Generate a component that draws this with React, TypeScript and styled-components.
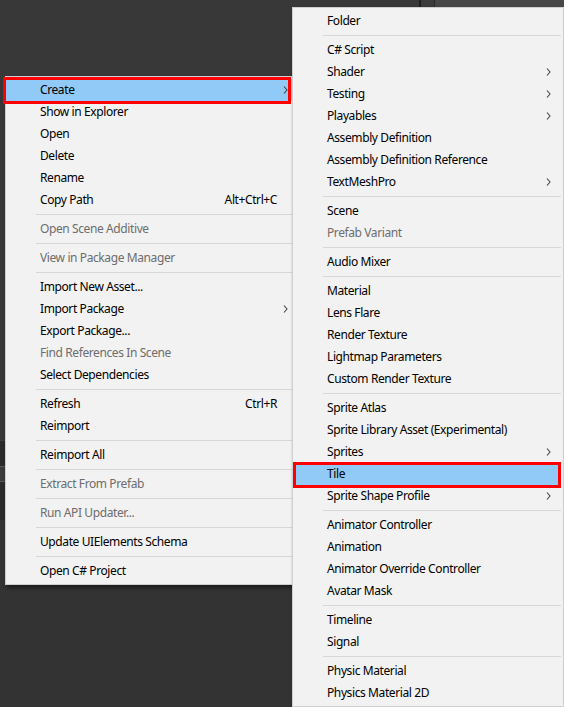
import React from "react";
import styled, { createGlobalStyle } from "styled-components";

const GlobalStyle = createGlobalStyle`
  html, body { margin: 0; padding: 0; }
  body {
    background: #383838;
    font-family: "Noto Sans", "Segoe UI", sans-serif;
    overflow: hidden;
  }
`;

const Stage = styled.div`
  position: relative;
  width: 564px;
  height: 707px;
  overflow: hidden;
  background: #383838;
`;

const Backdrop = styled.div`
  display: grid;
  grid-template-columns: 419px 2px 13px 1px 1fr;
  height: 100%;
`;

const Pane = styled.div<{ $bg: string }>`
  background: ${(p) => p.$bg};
`;

const LeftDock = styled.div`
  display: flex;
  flex-direction: column;
  background: #383838;
  overflow: hidden;
`;

const DockTop = styled.div`
  height: 440px;
  flex: none;
  background: #383838;
`;

const DockPanel = styled.div`
  height: 80px;
  flex: none;
  background: #2b2b2b;
  border-top: 1px solid #3f3f3f;
  box-sizing: border-box;
  display: flex;
  flex-direction: column;
  padding-top: 25px;
  gap: 12px;
`;

const DockField = styled.div`
  height: 14px;
  width: 40px;
  margin-left: -32px;
  border: 1px solid #5c5c5c;
  border-radius: 3px;
  background: #3c3c3c;
`;

const DockLabel = styled.div`
  margin-left: -22px;
  color: #8a8a8a;
  font-size: 12px;
  line-height: 14px;
`;

const DockRest = styled.div`
  flex: 1;
  background: #333333;
`;

const Menu = styled.ul<{ $left: number; $top: number; $width: number; $z: number }>`
  position: absolute;
  left: ${(p) => p.$left}px;
  top: ${(p) => p.$top}px;
  width: ${(p) => p.$width}px;
  z-index: ${(p) => p.$z};
  margin: 0;
  padding: 2px 2px 2px 0;
  list-style: none;
  background: #f2f2f2;
  border: 1px solid #cfcfcf;
  box-shadow: 2px 3px 4px rgba(0, 0, 0, 0.45);
  box-sizing: border-box;
  font-size: 12px;
  color: #000;
`;

const Item = styled.li<{ $disabled?: boolean; $active?: boolean }>`
  position: relative;
  display: grid;
  grid-template-columns: 34px 1fr auto 21px;
  align-items: center;
  height: 22px;
  line-height: 22px;
  color: ${(p) => (p.$disabled ? "#6d6d6d" : "#000000")};
  background: ${(p) => (p.$active ? "#91c9f7" : "transparent")};
  white-space: nowrap;
  letter-spacing: -0.4px;
`;

const Label = styled.span`
  grid-column: 2;
`;

const Shortcut = styled.span`
  grid-column: 3;
`;

const ArrowCell = styled.span`
  grid-column: 4;
  display: flex;
  align-items: center;
  padding-left: 6px;
`;

const Mark = styled.span<{ $l: number; $r: number; $t: number; $b: number }>`
  position: absolute;
  left: ${(p) => p.$l}px;
  right: ${(p) => p.$r}px;
  top: ${(p) => p.$t}px;
  bottom: ${(p) => p.$b}px;
  border: 3px solid #ff0000;
  pointer-events: none;
`;

const Separator = styled.li`
  height: 1px;
  margin: 3px 0 3px 30px;
  background: #d7d7d7;
`;

type Entry =
  | "sep"
  | {
      label: string;
      shortcut?: string;
      sub?: boolean;
      disabled?: boolean;
      active?: boolean;
      mark?: [number, number, number, number];
    };

const leftItems: Entry[] = [
  { label: "Create", sub: true, active: true, mark: [-3, 7, -2, -3] },
  { label: "Show in Explorer" },
  { label: "Open" },
  { label: "Delete" },
  { label: "Rename" },
  { label: "Copy Path", shortcut: "Alt+Ctrl+C" },
  "sep",
  { label: "Open Scene Additive", disabled: true },
  "sep",
  { label: "View in Package Manager", disabled: true },
  "sep",
  { label: "Import New Asset..." },
  { label: "Import Package", sub: true },
  { label: "Export Package..." },
  { label: "Find References In Scene", disabled: true },
  { label: "Select Dependencies" },
  "sep",
  { label: "Refresh", shortcut: "Ctrl+R" },
  { label: "Reimport" },
  "sep",
  { label: "Reimport All" },
  "sep",
  { label: "Extract From Prefab", disabled: true },
  "sep",
  { label: "Run API Updater...", disabled: true },
  "sep",
  { label: "Update UIElements Schema" },
  "sep",
  { label: "Open C# Project" },
];

const rightItems: Entry[] = [
  { label: "Folder" },
  "sep",
  { label: "C# Script" },
  { label: "Shader", sub: true },
  { label: "Testing", sub: true },
  { label: "Playables", sub: true },
  { label: "Assembly Definition" },
  { label: "Assembly Definition Reference" },
  { label: "TextMeshPro", sub: true },
  "sep",
  { label: "Scene" },
  { label: "Prefab Variant", disabled: true },
  "sep",
  { label: "Audio Mixer" },
  "sep",
  { label: "Material" },
  { label: "Lens Flare" },
  { label: "Render Texture" },
  { label: "Lightmap Parameters" },
  { label: "Custom Render Texture" },
  "sep",
  { label: "Sprite Atlas" },
  { label: "Sprite Library Asset (Experimental)" },
  { label: "Sprites", sub: true },
  { label: "Tile", active: true, mark: [0, 0, -1, -3] },
  { label: "Sprite Shape Profile", sub: true },
  "sep",
  { label: "Animator Controller" },
  { label: "Animation" },
  { label: "Animator Override Controller" },
  { label: "Avatar Mask" },
  "sep",
  { label: "Timeline" },
  { label: "Signal" },
  "sep",
  { label: "Physic Material" },
  { label: "Physics Material 2D" },
];

const Chevron = () => (
  <svg width="5" height="8" viewBox="0 0 5 8" aria-hidden="true">
    <path d="M1 0.5 L4 4 L1 7.5" fill="none" stroke="#444444" strokeWidth="1.1" />
  </svg>
);

const MenuList = ({ items }: { items: Entry[] }) => (
  <>
    {items.map((it, i) =>
      it === "sep" ? (
        <Separator key={i} />
      ) : (
        <Item key={i} $disabled={it.disabled} $active={it.active}>
          <Label>{it.label}</Label>
          {it.shortcut && <Shortcut>{it.shortcut}</Shortcut>}
          {it.sub && (
            <ArrowCell>
              <Chevron />
            </ArrowCell>
          )}
          {it.mark && <Mark $l={it.mark[0]} $r={it.mark[1]} $t={it.mark[2]} $b={it.mark[3]} />}
        </Item>
      )
    )}
  </>
);

export default function App() {
  return (
    <>
      <GlobalStyle />
      <Stage>
        <Backdrop>
          <LeftDock>
            <DockTop />
            <DockPanel>
              <DockField />
              <DockLabel>Set</DockLabel>
            </DockPanel>
            <DockRest />
          </LeftDock>
          <Pane $bg="#1f1f1f" />
          <Pane $bg="#3c3c3c" />
          <Pane $bg="#2a2a2a" />
          <Pane $bg="#474747" />
        </Backdrop>
        <Menu $left={5} $top={76} $width={296} $z={1}>
          <MenuList items={leftItems} />
        </Menu>
        <Menu $left={292} $top={7} $width={272} $z={2}>
          <MenuList items={rightItems} />
        </Menu>
      </Stage>
    </>
  );
}
